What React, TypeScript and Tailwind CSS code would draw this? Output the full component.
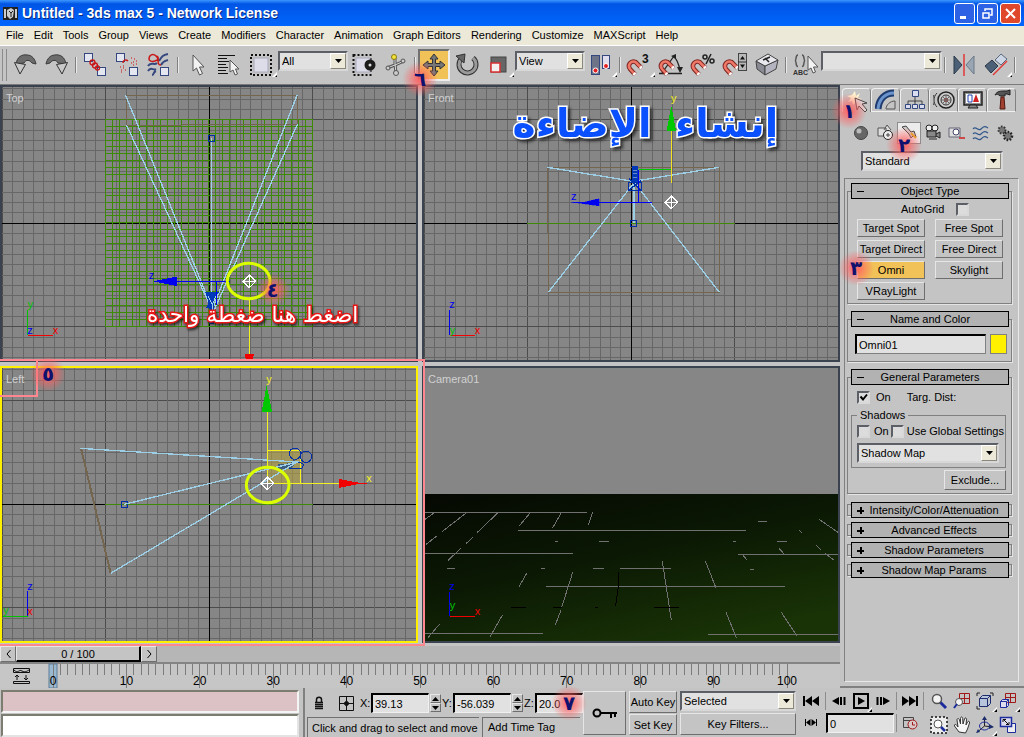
import { ReactNode } from "react";
import clsx from "clsx";

const menus = [
  "File", "Edit", "Tools", "Group", "Views", "Create", "Modifiers", "Character",
  "Animation", "Graph Editors", "Rendering", "Customize", "MAXScript", "Help",
];

const raised = "border border-t-[#e6e6e6] border-l-[#e6e6e6] border-b-[#6e6e6e] border-r-[#6e6e6e]";
const sunken = "border-2 border-t-[#5c6066] border-l-[#5c6066] border-b-[#d8d8d8] border-r-[#d8d8d8]";

/* ---------- shared controls ---------- */

function Step({ n, className }: { n: string; className: string }) {
  return (
    <span
      className={clsx(
        "pointer-events-none absolute z-20 flex size-9 items-center justify-center bg-radial from-[#ff6060dd] from-10% to-[#ff606000] to-70% font-['DejaVu_Sans'] text-xl font-bold text-[#10106e]",
        className,
      )}
    >
      {n}
    </span>
  );
}

function Combo({ label, value, className }: { label: string; value: string; className?: string }) {
  return (
    <div className={clsx("relative h-5 bg-[#e1e1e1]", sunken, className)}>
      <select aria-label={label} className="block h-4 w-full appearance-none bg-transparent pl-[2px] text-[11px] leading-4 outline-none">
        <option>{value}</option>
      </select>
      <span className="pointer-events-none absolute inset-y-0 right-0 flex w-4 items-center justify-center border border-t-white border-r-[#8a887c] border-b-[#8a887c] border-l-white bg-[#ece9d8]">
        <svg width="7" height="4" viewBox="0 0 7 4">
          <path d="M0 0h7L3.500 4z" />
        </svg>
      </span>
    </div>
  );
}

function Check({ id, checked }: { id: string; checked?: boolean }) {
  return (
    <span className="relative block size-[13px] shrink-0">
      <input id={id} type="checkbox" defaultChecked={checked} className={clsx("peer block size-[13px] appearance-none bg-[#dcdcdc]", sunken)} />
      <svg className="pointer-events-none absolute inset-0 hidden peer-checked:block" viewBox="0 0 13 13">
        <path d="M3.500 5.500l2.500 3 4-5" fill="none" stroke="#000" strokeWidth="2" />
      </svg>
    </span>
  );
}

function Button({ children, className }: { children: ReactNode; className?: string }) {
  return (
    <button className={clsx("relative flex items-center justify-center whitespace-nowrap text-[11px] leading-3", raised, className)}>
      {children}
    </button>
  );
}

function Spinner({ label }: { label: string }) {
  return (
    <span className="mx-px flex h-[18px] w-[11px] shrink-0 flex-col">
      <button aria-label={label + " up"} className={clsx("flex flex-1 items-center justify-center", raised)}>
        <svg width="7" height="4" viewBox="0 0 7 4"><path d="M0 4h7L3.500 0z" /></svg>
      </button>
      <button aria-label={label + " down"} className={clsx("flex flex-1 items-center justify-center", raised)}>
        <svg width="7" height="4" viewBox="0 0 7 4"><path d="M0 0h7L3.500 4z" /></svg>
      </button>
    </span>
  );
}

/* ---------- main toolbar ---------- */

function Tool({ label, children, active, flyout }: { label: string; children: ReactNode; active?: boolean; flyout?: boolean }) {
  return (
    <button
      aria-label={label}
      className={clsx(
        "relative flex size-8 shrink-0 items-center justify-center",
        active && "border-2 border-t-[#707070] border-r-[#eeeeee] border-b-[#eeeeee] border-l-[#707070] bg-[#f0c258]",
      )}
    >
      <svg width="26" height="26" viewBox="-1 -1 26 26" fill="none" className="shrink-0">{children}</svg>
      {flyout && (
        <svg width="5" height="5" viewBox="0 0 5 5" className="absolute right-0 bottom-1">
          <path d="M0 5L5 0v5z" fill="#fff" />
          <path d="M3 5h2V3z" fill="#000" />
        </svg>
      )}
    </button>
  );
}

function Sep() {
  return (
    <span className="flex w-[6px] shrink-0 justify-center">
      <span className="h-4 w-[2px] border-r border-l border-r-[#eaeaea] border-l-[#808080]" />
    </span>
  );
}

const Box = ({ x, y, s = 9 }: { x: number; y: number; s?: number }) => (
  <rect x={x + 0.5} y={y + 0.5} width={s - 1} height={s - 1} fill="#e4e6f0" stroke="#34477e" />
);

const Magnet = () => (
  <>
    <path d="M8 21.500L3 16C0 12 4 7 8.500 9l6 6" stroke="#7c2520" strokeWidth="4.500" />
    <path d="M8 21.500L3 16C0 12 4 7 8.500 9l6 6" stroke="#f07868" strokeWidth="2.500" />
    <path d="M6.700 20.100L8 21.500M13.200 13.700l1.300 1.300" stroke="#fff" strokeWidth="3.500" />
  </>
);

const Cursor = ({ x = 0, y = 0 }: { x?: number; y?: number }) => (
  <path transform={`translate(${x} ${y})`} d="M0 0v16l3.500-3 3 7 3-1.500-3-6.500H11z" fill="#f2f2f2" stroke="#555" />
);

function Toolbar() {
  return (
    <div className="relative z-10 flex h-10 items-center overflow-visible border-t border-b border-t-white border-b-[#7a7a7a] bg-[#c4c4c4]">
      <span className="ml-[2px] mr-[2px] h-8 w-[5px] shrink-0 border-x border-x-[#8c8c8c]" />
      <Tool label="Undo">
        <path d="M3 11C4 4 9 1 14 2c5 0 8 4 9 9l-4-1c-2-3-6-4-8 0z" fill="#6c6c6c" stroke="#3a3a3a" />
        <path d="M1.500 9.500l11 2L7 21z" fill="#c8c8c8" stroke="#333" />
      </Tool>
      <Tool label="Redo">
        <path d="M21 11c-1-7-6-10-11-9-5 0-8 4-9 9l4-1c2-3 6-4 8 0z" fill="#6c6c6c" stroke="#3a3a3a" />
        <path d="M22.500 9.500l-11 2L17 21z" fill="#c8c8c8" stroke="#333" />
      </Tool>
      <Sep />
      <Tool label="Select and Link">
        <Box x={1} y={0} />
        <Box x={14} y={14} />
        <circle cx="9.500" cy="9.500" r="2.500" stroke="#c81818" strokeWidth="1.300" />
        <circle cx="12" cy="12.500" r="2.500" stroke="#c81818" strokeWidth="1.300" />
        <circle cx="14.500" cy="15" r="2" stroke="#c81818" strokeWidth="1.300" />
      </Tool>
      <Tool label="Unlink Selection">
        <Box x={1} y={0} />
        <Box x={14} y={14} />
        <path d="M8 10c0-3 3-4 5-2" stroke="#c81818" strokeWidth="1.500" />
        <path d="M5 14h1m2-1h1m-3 4h1m1-2h1m-3 4h1m3-2h1m5-12h1m2 1h1m-2 3h1m2-1h1m-6 2h1m1 2h1m2-1h1" stroke="#d04848" strokeWidth="1.500" />
      </Tool>
      <Tool label="Bind to Space Warp">
        <path d="M1 13c3-5 6 0 9-3M1 18c3-5 5 0 8-2M12 8c3-5 4-6 9-7M14 12c2-4 4-4 7-5M5 22c2 0 1-3 4-4" stroke="#34477e" strokeWidth="2" />
        <path d="M2 6C2 2 6 0 9 3s2 4-1 5-6 0-6-2zM9 3c5 0-1 9 5 9" stroke="#c81818" strokeWidth="1.500" />
        <Box x={13} y={14} />
      </Tool>
      <Sep />
      <Tool label="Select Object"><Cursor x={8} y={2} /></Tool>
      <Tool label="Select by Name">
        <path d="M1 2.500h17M1 5.500h9M1 8.500h11M1 11.500h8M1 14.500h10M1 17.500h8M1 20.500h10" stroke="#111" />
        <path d="M13 7v12l3-2 2 5 2.500-1-2-5H22z" fill="#f2f2f2" stroke="#555" />
      </Tool>
      <Tool label="Rectangular Selection Region" flyout>
        <rect x="2" y="2" width="20" height="20" stroke="#111" strokeWidth="2" strokeDasharray="2 2" />
        <rect x="5" y="5" width="14" height="14" fill="#dcdde8" stroke="#a8aabb" />
      </Tool>
      <Combo label="Selection Filter" value="All" className="ml-px w-[70px] shrink-0 -translate-y-1" />
      <Tool label="Window / Crossing">
        <rect x="1.500" y="2" width="17" height="20" stroke="#111" strokeWidth="2" strokeDasharray="2 2" />
        <rect x="4" y="5" width="14" height="14" fill="#dcdde8" stroke="#a8aabb" />
        <circle cx="18" cy="12" r="5.500" fill="#1c1c1c" />
        <circle cx="18" cy="12" r="1.500" fill="#ddd" />
      </Tool>
      <Tool label="Select and Manipulate">
        <path d="M3 15l8-3 9-4M11 5v6l1 9" stroke="#555" strokeWidth="3" />
        <path d="M3 15l8-3 9-4M11 5v6l1 9" stroke="#d8d8d8" />
        <circle cx="10" cy="4" r="2.500" fill="#f4e23c" stroke="#8c7c10" />
        <circle cx="19" cy="8" r="2" fill="#ccc" stroke="#555" />
        <circle cx="4" cy="15" r="2" fill="#ccc" stroke="#555" />
        <circle cx="12" cy="20" r="2.500" fill="#ccc" stroke="#555" />
      </Tool>
      <Sep />
      <div className="relative">
        <Tool label="Select and Move" active>
          <path
            d="M12 1l4 5h-2.500v4.500H18V8l5 4-5 4v-2.500h-4.500V18H16l-4 5-4-5h2.500v-4.500H6V16l-5-4 5-4v2.500h4.500V6H8z"
            fill="#777" stroke="#333"
          />
        </Tool>
        <Step n="٦" className="-left-4 top-3" />
      </div>
      <Tool label="Select and Rotate">
        <path d="M7 6a8.500 8.500 0 1 0 12-1" stroke="#333" strokeWidth="5" />
        <path d="M7 6a8.500 8.500 0 1 0 12-1" stroke="#9a9a9a" strokeWidth="3" />
        <path d="M2 3l9-2-1 9z" fill="#666" stroke="#333" />
      </Tool>
      <Tool label="Select and Uniform Scale" flyout>
        <rect x="5" y="4" width="15" height="15" fill="#666" stroke="#444" />
        <rect x="5" y="10" width="9" height="9" fill="#f4f0f0" stroke="#d83030" strokeWidth="1.500" />
      </Tool>
      <Combo label="Reference Coordinate System" value="View" className="ml-px w-[70px] shrink-0 -translate-y-1" />
      <Tool label="Use Pivot Point Center" flyout>
        <rect x="2.500" y="2.500" width="8" height="19" fill="#6d7488" stroke="#34477e" />
        <rect x="13.500" y="2.500" width="7" height="13" fill="#dde" stroke="#34477e" />
        <circle cx="6.500" cy="17.500" r="2.500" fill="#e42020" stroke="#fff" />
        <circle cx="17" cy="13" r="2.500" fill="#e42020" stroke="#fff" />
      </Tool>
      <Sep />
      <Tool label="3D Snap Toggle" flyout>
        <Magnet />
        <text x="15" y="10" fontSize="12" fontWeight="bold" fill="#111" className="font-['Liberation_Sans']">3</text>
      </Tool>
      <Tool label="Angle Snap Toggle">
        <path d="M0 20.500h23M3 20L15 3M14 3c4 3 6 8 7 15" stroke="#222" strokeWidth="1.300" />
        <path d="M12 3l5-2v5zM18 14h6l-3 6z" fill="#222" />
        <Magnet />
      </Tool>
      <Tool label="Percent Snap Toggle">
        <Magnet />
        <circle cx="14" cy="4" r="2" stroke="#222" strokeWidth="1.500" />
        <circle cx="21" cy="8" r="2" stroke="#222" strokeWidth="1.500" />
        <path d="M20 1l-5 10" stroke="#222" strokeWidth="1.500" />
      </Tool>
      <Tool label="Spinner Snap Toggle">
        <Magnet />
        <rect x="15.500" y=".5" width="8" height="17" fill="#b8b8b8" stroke="#444" />
        <path d="M15 9h9" stroke="#333" />
        <path d="M17 6.500h5L19.500 3zM17 11.500h5L19.500 15z" fill="#111" />
      </Tool>
      <Tool label="Keyboard Shortcut Override">
        <path d="M1 8l9 5v9l-8-6z" fill="#8a8a94" stroke="#444" />
        <path d="M10 13l13-6-2 9-11 6z" fill="#b4b4c0" stroke="#444" />
        <path d="M1 8L13 1l10 6-13 6z" fill="#e8e8ee" stroke="#444" />
        <path d="M8 7l7-3M10 5l4 4" stroke="#222" strokeWidth="1.500" />
      </Tool>
      <Sep />
      <Tool label="Named Selection Sets">
        <path d="M5 2c-3 0-1 5-3 5.500 2 .5 0 6 3 6M9 2c3 0 1 5 3 5.500-2 .5 0 6-3 6" stroke="#555" strokeWidth="1.500" />
        <path d="M15 3v14l3-2 2 5 2.500-1-2-5H25z" fill="#f2f2f2" stroke="#555" />
        <text x="0" y="22" fontSize="7" fontWeight="bold" fill="#333" className="font-['Liberation_Sans']">ABC</text>
      </Tool>
      <Combo label="Named Selection" value="" className="w-[119px] min-w-0 flex-1 -translate-y-1" />
      <Sep />
      <Tool label="Mirror">
        <path d="M2 3v18l8-9z" fill="#4c6078" stroke="#2a3a4a" />
        <path d="M22 3v18l-8-9z" fill="#9aa6b4" stroke="#6a7888" />
        <path d="M12 1v22" stroke="#e03838" strokeWidth="1.500" />
      </Tool>
      <Tool label="Align" flyout>
        <path d="M1 13l7-6 6 6-7 7z" fill="#4c6078" stroke="#2a3a4a" />
        <path d="M11 7l6-6 6 5-6 6z" fill="#ccd6e4" stroke="#5a6a7c" />
        <path d="M9 22L23 8" stroke="#e03838" strokeWidth="1.500" />
      </Tool>
      <Sep />
      <span className="w-[6px] shrink-0" />
    </div>
  );
}

/* ---------- viewports (three drawing units to a screen pixel) ---------- */

const lines = Array.from({ length: 41 }, (_, i) => i - 20);

function Grid({ cx, cy }: { cx: number; cy: number }) {
  const color = (i: number) => (i % 10 === 0 ? "#4c4c4c" : "#676767");
  return (
    <g strokeWidth="3">
      <rect x="0" y="0" width="1272" height="855" fill="#868686" />
      {lines.map((i) => (
        <path key={i} stroke={color(i)} d={`M${cx + i * 31.050} 0V855M0 ${cy + i * 31.050}H1272`} />
      ))}
      <path stroke="#000" d={`M${cx} 0V855M0 ${cy}H1272`} />
    </g>
  );
}

function Axis({ x, y, color, children }: { x: number; y: number; color: string; children: string }) {
  return (
    <text x={x} y={y} fill={color} fontSize="33" className="font-['Liberation_Sans']">{children}</text>
  );
}

function Target({ x, y }: { x: number; y: number }) {
  return (
    <path d={`M${x - 19} ${y}L${x} ${y - 19}L${x + 19} ${y}L${x} ${y + 19}ZM${x - 19} ${y}H${x + 19}M${x} ${y - 19}V${y + 19}`} fill="none" stroke="#fff" strokeWidth="3" />
  );
}

function Ring({ x, y }: { x: number; y: number }) {
  return <ellipse cx={x} cy={y} rx="64" ry="53" fill="none" stroke="#dcff00" strokeWidth="9" shapeRendering="auto" />;
}

function Viewport({ name, viewBox, active, children, overlay }: { name: string; viewBox: string; active?: boolean; children: ReactNode; overlay?: ReactNode }) {
  return (
    <section aria-label={name} className={clsx("relative border-2", active ? "border-[#fff000]" : "border-[#3a4250]")}>
      <svg className="absolute inset-0 size-full" viewBox={viewBox} preserveAspectRatio="xMidYMid slice" shapeRendering="crispEdges">{children}</svg>
      <h2 className="absolute top-[3px] left-1 text-[11px] leading-4 text-[#d0d0d0]">{name}</h2>
      {overlay}
    </section>
  );
}

function TopView() {
  return (
    <Viewport name="Top" viewBox="6 6 1242 819">
      <Grid cx={628} cy={415} />
      <g stroke="#3c8a08" strokeWidth="3">
        {Array.from({ length: 31 }, (_, i) => (
          <path key={i} d={`M${316 + i * 20.730} 103V724M316 ${103 + i * 20.700}H938`} />
        ))}
      </g>
      <path d="M377 31H892V118L380 121V31" fill="none" stroke="#74664e" strokeWidth="3" />
      <path d="M377 31L634 665M380 121L637 676M892 29L640 665M892 118L642 676M634 160V680" fill="none" stroke="#9ccfe6" strokeWidth="4" />
      <rect x="625" y="151" width="18" height="18" fill="none" stroke="#0030a8" strokeWidth="3" />
      <path d="M616 622h40l-14 26v70h-16v-50h-8l8-14z" fill="#0038b8" />
      <path d="M624 632L637 660L648 632M637 655V690" fill="none" stroke="#9ccfe6" strokeWidth="3" />
      <path d="M530 589H690M650 589V660" stroke="#0000f0" strokeWidth="3" />
      <path d="M460 589L530 575V603Z" fill="#0000f0" />
      <Axis x={446} y={583} color="#0000f0">z</Axis>
      <path d="M748 640V810" stroke="#f4f020" strokeWidth="3" />
      <path d="M734 807h28l-4 18h-20z" fill="#f00000" />
      <Ring x={746} y={588} />
      <Target x={748} y={589} />
      <path d="M83 751V676" stroke="#00c000" strokeWidth="3" />
      <path d="M83 751H160" stroke="#f00000" strokeWidth="3" />
      <Axis x={83} y={668} color="#00c000">y</Axis>
      <Axis x={82} y={748} color="#0000f0">z</Axis>
      <Axis x={158} y={748} color="#f00000">x</Axis>
      <radialGradient id="glow">
        <stop offset="0.100" stopColor="#ff6060" stopOpacity="0.900" />
        <stop offset="1" stopColor="#ff6060" stopOpacity="0" />
      </radialGradient>
      <circle cx="820" cy="615" r="48" fill="url(#glow)" />
      <text x="818" y="636" textAnchor="middle" fontSize="58" fontWeight="bold" fill="#10106e" className="font-['DejaVu_Sans']">٤</text>
      <text
        x="758" y="712" textAnchor="middle" direction="rtl" fontSize="65" fill="#fff" stroke="#e81818" strokeWidth="9"
        className="font-['DejaVu_Sans'] [paint-order:stroke_fill] drop-shadow-[4px_6px_3px_#00000099]"
      >
        اضغط هنا ضغطة واحدة
      </text>
    </Viewport>
  );
}

function FrontView() {
  return (
    <Viewport name="Front" viewBox="12 6 1242 819">
      <Grid cx={634} cy={415} />
      <path d="M322 415H944" stroke="#3c8a08" strokeWidth="3" />
      <path d="M383 247H898V622H385Z" fill="none" stroke="#74664e" strokeWidth="3" />
      <path d="M382 247L640 289L898 247M385 622L643 292L898 622M642 292V415" fill="none" stroke="#9ccfe6" strokeWidth="4" />
      <rect x="636" y="244" width="18" height="48" fill="#0038b8" />
      <path d="M638 256h14M638 266h14M638 276h14" stroke="#6888c8" strokeWidth="3" />
      <path d="M626 292H664V316H626ZM626 280L664 316M664 286L626 316" fill="none" stroke="#0030a8" strokeWidth="4" />
      <rect x="631" y="406" width="18" height="18" fill="none" stroke="#0030a8" strokeWidth="3" />
      <path d="M536 352H696M656 352V256" stroke="#0000f0" strokeWidth="3" />
      <path d="M452 352H490L537 341V363L474 354Z" fill="#0000f0" stroke="#0000f0" />
      <path d="M656 254H754" stroke="#00c800" strokeWidth="3" />
      <Axis x={453} y={346} color="#0000f0">z</Axis>
      <path d="M754 136V293" stroke="#f4e020" strokeWidth="3" />
      <path d="M754 62L768 137H740Z" fill="#00c800" />
      <Axis x={753} y={50} color="#f4f020">y</Axis>
      <Target x={754} y={352} />
      <path d="M89 751V676" stroke="#0000f0" strokeWidth="3" />
      <path d="M89 751H166" stroke="#f00000" strokeWidth="3" />
      <Axis x={88} y={670} color="#0000f0">z</Axis>
      <Axis x={89} y={748} color="#00c000">y</Axis>
      <Axis x={164} y={748} color="#f00000">x</Axis>
      <g
        textAnchor="middle" direction="rtl" fontSize="118" fill="#0a50ff" stroke="#fff" strokeWidth="9"
        className="font-['DejaVu_Sans'] font-bold [paint-order:stroke_fill] drop-shadow-[8px_8px_4px_#00000099]"
      >
        <text x="920" y="156">إنشاء</text>
        <text x="486" y="156">الإضاءة</text>
      </g>
    </Viewport>
  );
}

function LeftView() {
  return (
    <Viewport
      name="Left"
      viewBox="6 24 1242 819"
      active
      overlay={
        <>
          <span className="pointer-events-none absolute -top-[9px] -right-[9px] -bottom-[5px] -left-[2px] z-10 border-2 border-l-0 border-[#ff8890]" />
          <span className="pointer-events-none absolute -top-[9px] -left-[2px] z-10 h-[38px] w-[38px] border-2 border-l-0 border-[#ff8890]" />
          <Step n="٥" className="-top-3 left-7" />
        </>
      }
    >
      <Grid cx={628} cy={433} />
      <path d="M316 433H938" stroke="#3c8a08" strokeWidth="3" />
      <path d="M243 265L332 640" stroke="#74664e" strokeWidth="6" />
      <rect x="803" y="271" width="99" height="99" fill="#b8a63a" fillOpacity=".55" stroke="#f4f020" strokeWidth="3" />
      <g fill="none" stroke="#0030a8" strokeWidth="3">
        <circle cx="885" cy="281" r="17" />
        <circle cx="918" cy="290" r="17" />
        <path d="M870 325h36l6-12-24-10z" />
        <rect x="364" y="424" width="18" height="18" />
      </g>
      <path d="M834 312l36-2 14-12 4 10-14 16-38 6z" fill="#3c5c80" />
      <path d="M240 265L892 306L332 640M373 433L892 306" fill="none" stroke="#9ccfe6" strokeWidth="4" />
      <path d="M802 312V155M802 370H1017" stroke="#f4f020" strokeWidth="3" />
      <path d="M800 76L816 155H785Z" fill="#00c800" />
      <path d="M1017 357L1086 370L1017 384Z" fill="#f00000" />
      <path d="M1080 370H1102" stroke="#f00000" strokeWidth="3" />
      <Axis x={799} y={69} color="#f4f020">y</Axis>
      <Axis x={1099} y={366} color="#f4f020">x</Axis>
      <Ring x={803} y={375} />
      <Target x={802} y={370} />
      <path d="M83 769V694" stroke="#0000f0" strokeWidth="3" />
      <path d="M8 769H83" stroke="#00c000" strokeWidth="3" />
      <Axis x={82} y={690} color="#0000f0">z</Axis>
      <Axis x={10} y={763} color="#00c000">y</Axis>
      <Axis x={82} y={766} color="#f00000">x</Axis>
    </Viewport>
  );
}

function CameraView() {
  return (
    <Viewport name="Camera01" viewBox="12 24 1242 819">
      <linearGradient id="floor" x1="0" y1="0" x2="0.600" y2="1">
        <stop offset="0" stopColor="#050802" />
        <stop offset="0.500" stopColor="#0b1904" />
        <stop offset="1" stopColor="#193206" />
      </linearGradient>
      <rect width="1272" height="855" fill="#868686" />
      <rect y="402" width="1272" height="453" fill="url(#floor)" />
      <g fill="none" stroke="#707070" strokeWidth="3">
        <path d="M12 457H501M294 511H978M12 580H459M954 583H1254M600 625H753M378 679H1095M12 820H369M864 823H1254M81 625H105M363 625H375M519 625H552M405 544H414M537 544H567M939 544H948M1071 544H1101M1014 484H1041M990 628H1002" />
        <path d="M45 457L15 478M141 457L66 515M52 527L18 553M234 458L172 517M158 532L138 551M123 565L84 601M329 460L297 499M423 460L397 505M518 457L505 496M320 640L297 680M458 637L424 745M423 750L406 795M727 603L754 781M856 603L888 684M247 766L210 830M58 793L24 833M918 757L950 835M1084 757L1130 827M1197 478L1254 517M1137 511L1145 517M1188 556L1203 570M1077 565L1096 586M969 586L981 600M1215 580L1241 600" />
      </g>
      <path d="M595 637V680L587 737M273 742H318M399 742H426M525 742H534M702 742H777" fill="none" stroke="#000" strokeWidth="3" />
      <path d="M89 769V696" stroke="#0000f0" strokeWidth="3" />
      <path d="M89 769H166" stroke="#f00000" strokeWidth="3" />
      <Axis x={88} y={691} color="#0000f0">z</Axis>
      <Axis x={89} y={746} color="#00c000">y</Axis>
      <Axis x={164} y={766} color="#f00000">x</Axis>
    </Viewport>
  );
}

/* ---------- time slider and track bar ---------- */

function TimeSlider() {
  return (
    <div className="mt-[3px] flex h-4 bg-[#b6b6b6] text-[11px]">
      <Button className="w-4 bg-[#c4c4c4]">
        <svg width="5" height="8" viewBox="0 0 5 8" fill="none" stroke="#000"><path d="M4.500 0L1 4l3.500 4" /></svg>
      </Button>
      <button className="w-[125px] border border-t-[#e6e6e6] border-r-2 border-r-black border-b-2 border-b-black border-l-[#e6e6e6] bg-[#c4c4c4] leading-3">0 / 100</button>
      <Button className="w-4 bg-[#c4c4c4]">
        <svg width="5" height="8" viewBox="0 0 5 8" fill="none" stroke="#000"><path d="M.5 0L4 4 .5 8" /></svg>
      </Button>
    </div>
  );
}

function TrackBar() {
  return (
    <div className="flex h-[26px] border-t-2 border-t-[#848484] bg-[#c6c6c6]">
      <button aria-label="Open Mini Curve Editor" className="flex w-[53px] items-center pl-3">
        <svg width="19" height="18" viewBox="0 0 19 18" fill="none" stroke="#111">
          <path d="M1.500 1.500h16v4h-16zM1.500 14.500h16v2h-16zM2 3c4 4 5-1 8 1s5 0 7-1M5 13V8M3 10l2-2 2 2M14 8v5M12 11l2 2 2-2" />
        </svg>
      </button>
      <svg className="mr-[53px] h-6 flex-1 overflow-visible text-[12px]">
        <rect x="-4" y="0" width="8" height="24" fill="#9ab8d0" stroke="#5c7c98" />
        {Array.from({ length: 101 }, (_, i) => (
          <line key={i} x1={`${i}%`} x2={`${i}%`} y1="0" y2={i % 10 ? 11 : 24} stroke="#7c7c7c" shapeRendering="crispEdges" />
        ))}
        {Array.from({ length: 11 }, (_, i) => (
          <text key={i} x={`${i * 10}%`} y="21" textAnchor="middle">{i * 10}</text>
        ))}
      </svg>
    </div>
  );
}

/* ---------- command panel ---------- */

const tabs: [string, ReactNode][] = [
  ["Create", <>
    <path d="M9 1l1 5 4-3-2 5 4 1-4 1-5 5-1-4-4 1 3-4-4-2 5-1z" fill="#fff6d0" />
    <path d="M9 8l12 5-5 1 5 6-2 2-6-6-2 4z" fill="#ddd" stroke="#444" />
  </>],
  ["Modify", <>
    <path d="M3 20C4 10 10 4 19 4" stroke="#1e3c70" strokeWidth="7" />
    <path d="M3 20C4 10 10 4 19 4" stroke="#6c94cc" strokeWidth="3" />
    <path d="M11 20c0-4 4-8 9-8v8z" stroke="#555" />
  </>],
  ["Hierarchy", <>
    <path d="M11 7v6M4 15v-3h14v3M11 12v3" stroke="#444" />
    <path d="M8.500 1.500h6v6h-6zM1.500 15.500h5v4h-5zM8.500 15.500h5v4h-5zM15.500 15.500h5v4h-5z" fill="#d8def0" stroke="#34477e" />
  </>],
  ["Motion", <>
    <circle cx="13" cy="11" r="8" fill="#ccc" stroke="#222" strokeWidth="1.500" />
    <circle cx="13" cy="11" r="5" stroke="#333" />
    <circle cx="13" cy="11" r="2" fill="#c02020" />
    <path d="M13 6v10M8 11h10M9 7l8 8M17 7l-8 8" stroke="#666" />
    <path d="M4 4c-4 4-4 10 0 14M1 6c-2 4-2 7 0 10" stroke="#333" />
  </>],
  ["Display", <>
    <path d="M2 3h18v13H2z" fill="#909090" stroke="#222" strokeWidth="1.500" />
    <path d="M4 5h14v9H4z" fill="#fff" />
    <path d="M11 13l3-8 3 8z" fill="#d02020" />
    <path d="M6 6h4v7H6z" stroke="#2040b0" />
    <path d="M6 19h10l-2-3H8z" fill="#888" stroke="#222" />
  </>],
  ["Utilities", <>
    <path d="M4 6c2-4 6-4 9-4h3l3-1v5l-3-1h-2v2H9C7 5 6 5 4 6z" fill="#555" stroke="#222" />
    <path d="M10 8h3l1 12H9z" fill="#a04030" stroke="#501810" />
  </>],
];

const categories: [string, ReactNode][] = [
  ["Geometry", <>
    <circle cx="9" cy="9" r="6.500" fill="#666" stroke="#444" />
    <circle cx="7" cy="7" r="2.500" fill="#bbb" />
  </>],
  ["Shapes", <>
    <path d="M2 4h8v8H2zM8 6l3-5 4 5" fill="#ddd" stroke="#555" />
    <circle cx="12" cy="11" r="4.500" fill="#eee" stroke="#222" />
    <path d="M12 9v4M10 11h4" stroke="#444" />
  </>],
  ["Lights", <>
    <path d="M2 3l4-1 5 6 3-1 2 6-3-1-2 2-2-4z" fill="#ccc" stroke="#444" />
    <path d="M11 9l5 5" stroke="#e8b020" strokeWidth="2" />
  </>],
  ["Cameras", <>
    <circle cx="5" cy="4" r="3" fill="#eee" stroke="#222" />
    <circle cx="11" cy="4" r="3" fill="#eee" stroke="#222" />
    <path d="M3 7h9v6H3zM12 10l4-2v6l-4-2M5 15h8" fill="#888" stroke="#222" />
  </>],
  ["Helpers", <>
    <path d="M1 4h11v9H1z" fill="#ddd" stroke="#667" />
    <circle cx="8" cy="8" r="3" fill="#fff" stroke="#446" />
    <path d="M11 14h6" stroke="#d02020" strokeWidth="1.500" />
  </>],
  ["Space Warps", <path d="M1 5c3-4 5 3 8 0s4-3 7-1M1 10c3-4 5 3 8 0s4-3 7-1M1 15c3-4 5 3 8 0s4-3 7-1" stroke="#34588c" strokeWidth="1.200" />],
  ["Systems", <>
    <circle cx="6" cy="6" r="3.500" fill="#777" stroke="#333" strokeWidth="2" strokeDasharray="1.500 1.500" />
    <circle cx="12" cy="12" r="4" fill="#777" stroke="#222" strokeWidth="2.500" strokeDasharray="1.500 1.500" />
  </>],
];

function Rollout({ title, children }: { title: string; children?: ReactNode }) {
  return (
    <section className={clsx("mr-[6px] ml-[2px] border border-[#808080] shadow-[1px_1px_0_#e4e4e4]", children ? "mt-[15px] first:mt-3" : "mt-2 h-3")}>
      <button
        className={clsx(
          "relative mx-[3px] block h-4 w-[158px] border border-black bg-[#b2b2b2] text-center text-[11px] leading-[14px]",
          children ? "-mt-[9px]" : "-mt-[3px] pl-2",
        )}
      >
        <svg className="absolute top-1 left-[5px]" width="7" height="7" viewBox="0 0 7 7" stroke="#000" shapeRendering="crispEdges">
          {children ? <path d="M0 3.500h7" /> : <path d="M0 3.500h7M3.500 0v7" strokeWidth="2" />}
        </svg>
        {title}
      </button>
      {children}
    </section>
  );
}

function CommandPanel() {
  return (
    <aside className="flex w-[184px] shrink-0 flex-col border-b-2 border-b-[#808080] bg-[#c4c4c4] pt-[3px] text-[11px]">
      <div className="flex h-6 pl-[2px]">
        {tabs.map(([name, icon], i) => (
          <button
            key={name}
            aria-label={name}
            className={clsx(
              "relative flex w-[29px] items-center justify-center rounded-t border-t border-r border-l border-t-[#f0f0f0] border-r-[#808080] border-l-[#f0f0f0]",
              i > 0 && "border-b border-b-[#f0f0f0]",
            )}
          >
            <svg width="22" height="22" viewBox="0 0 22 22" fill="none">{icon}</svg>
            {i === 0 && <Step n="١" className="-left-3 top-1" />}
          </button>
        ))}
      </div>
      <div className="mt-[9px] flex h-6 items-center pl-[9px]">
        {categories.map(([name, icon]) => (
          <button
            key={name}
            aria-label={name}
            className={clsx("relative flex h-[22px] w-6 items-center justify-center", name === "Lights" && "border border-[#8c8c8c] bg-[#ececec]")}
          >
            <svg width="18" height="18" viewBox="0 0 18 18" fill="none" className="shrink-0">{icon}</svg>
            {name === "Lights" && <Step n="٢" className="-left-3 top-1" />}
          </button>
        ))}
      </div>
      <Combo label="Light Category" value="Standard" className="mt-[6px] mr-[21px] ml-[21px]" />

      <div className="mt-[7px] mr-[5px] mb-1 ml-1 flex-1 border border-t-[#808080] border-r-[#e8e8e8] border-b-[#e8e8e8] border-l-[#808080]">
        <Rollout title="Object Type">
          <div className="mt-[3px] flex h-[14px] items-center pl-[53px]">
            <label htmlFor="autogrid" className="mr-3">AutoGrid</label>
            <Check id="autogrid" />
          </div>
          <div className="mt-[3px] grid grid-cols-[68px_68px] gap-x-[10px] gap-y-[3px] pb-[3px] pl-[9px]">
            <Button className="h-[18px]">Target Spot</Button>
            <Button className="h-[18px]">Free Spot</Button>
            <Button className="h-[18px]">Target Direct</Button>
            <Button className="h-[18px]">Free Direct</Button>
            <Button className="h-[18px] bg-[#f0c258]">
              Omni
              <Step n="٣" className="-top-3 -left-5" />
            </Button>
            <Button className="h-[18px]">Skylight</Button>
            <Button className="h-[18px]">VRayLight</Button>
          </div>
        </Rollout>

        <Rollout title="Name and Color">
          <div className="mt-[7px] flex gap-1 pr-1 pb-[7px] pl-[7px]">
            <input aria-label="Object name" defaultValue="Omni01" className="h-5 min-w-0 flex-1 border-t-2 border-r border-b border-l-2 border-t-black border-r-[#808080] border-b-[#808080] border-l-black bg-[#e1e1e1] px-[2px] outline-none" />
            <button aria-label="Object color" className="h-5 w-[17px] border border-[#808080] bg-[#fff000]" />
          </div>
        </Rollout>

        <Rollout title="General Parameters">
          <div className="mt-[6px] flex h-[13px] items-center pl-[9px]">
            <Check id="light-on" checked />
            <label htmlFor="light-on" className="ml-[6px]">On</label>
            <span className="ml-4">Targ. Dist:</span>
          </div>
          <fieldset className="mt-1 mr-[5px] ml-[3px] min-w-0 border border-[#808080] pb-1 pl-[5px]">
            <legend className="px-[3px] leading-[14px]">Shadows</legend>
            <div className="mt-[3px] flex h-3 items-center">
              <Check id="shadows-on" />
              <label htmlFor="shadows-on" className="ml-1">On</label>
              <span className="w-[2px] shrink-0" />
              <Check id="shadows-global" />
              <label htmlFor="shadows-global" className="ml-[3px] whitespace-nowrap">Use Global Settings</label>
            </div>
            <Combo label="Shadow type" value="Shadow Map" className="mt-[6px] mr-[6px]" />
          </fieldset>
          <div className="mt-[2px] flex justify-end pr-[5px] pb-[3px]">
            <Button className="h-5 w-[62px]">Exclude...</Button>
          </div>
        </Rollout>

        <div className="h-[2px]" />
        <Rollout title="Intensity/Color/Attenuation" />
        <Rollout title="Advanced Effects" />
        <Rollout title="Shadow Parameters" />
        <Rollout title="Shadow Map Params" />
      </div>
    </aside>
  );
}

/* ---------- status bar ---------- */

function Coord({ axis, value, className, children }: { axis: string; value: string; className: string; children?: ReactNode }) {
  return (
    <>
      <label htmlFor={"coord-" + axis} className="w-[11px] shrink-0">{axis}:</label>
      <div className={clsx("relative", className)}>
        <input id={"coord-" + axis} defaultValue={value} className="block h-5 w-full border-t-2 border-r border-b border-l-2 border-t-black border-r-[#f0f0f0] border-b-[#f0f0f0] border-l-black bg-[#e1e1e1] px-[2px] outline-none" />
        {children}
      </div>
    </>
  );
}

function Glyph({ label, className, children, flyout }: { label: string; className?: string; children: ReactNode; flyout?: boolean }) {
  return (
    <button aria-label={label} className={clsx("relative flex h-[22px] shrink-0 items-center justify-center", className)}>
      <svg width="18" height="18" viewBox="0 0 18 18" fill="none">{children}</svg>
      {flyout && (
        <svg width="5" height="5" viewBox="0 0 5 5" className="absolute right-0 bottom-0">
          <path d="M0 5L5 0v5z" fill="#fff" />
          <path d="M2 5h3V2z" fill="#000" />
        </svg>
      )}
    </button>
  );
}

const Divider = () => (
  <span className="flex w-[5px] shrink-0 justify-center"><span className="h-[18px] border-l border-[#8c8c8c]" /></span>
);

function StatusBar() {
  return (
    <footer className="flex h-[49px] bg-[#c4c4c4] text-[11px]">
      <div className="flex min-w-0 flex-1 flex-col gap-px pt-[2px] pr-1 pl-px">
        <input aria-label="Macro recorder" className="h-[23px] w-full border-2 border-t-[#7c7c70] border-r-[#f4f4f4] border-b-[#f4f4f4] border-l-[#7c7c70] bg-[#dcc2c4] outline-none" />
        <input aria-label="Script listener" className="h-[23px] w-full border-2 border-t-[#7c7c70] border-r-[#e4e4e4] border-b-[#e4e4e4] border-l-[#7c7c70] bg-white outline-none" />
      </div>

      <div className="w-[280px] border-l-2 border-l-[#808080] pl-[2px]">
        <div className="mt-1 flex h-[22px] items-center">
          <button aria-label="Selection Lock Toggle" className="flex w-6 shrink-0 justify-center">
            <svg width="10" height="14" viewBox="0 0 10 14" fill="none" stroke="#111">
              <path d="M2.500 6V3.500c0-3 5-3 5 0V6" strokeWidth="1.500" />
              <path d="M1 6.500h8M1 8.500h8M1 10.500h8M1 12.500h8" strokeWidth="1.400" />
            </svg>
          </button>
          <button aria-label="Absolute Mode" className="mr-[2px] ml-[3px] flex w-6 shrink-0 justify-center">
            <svg width="15" height="15" viewBox="0 0 15 15" fill="none" stroke="#111">
              <path d="M.5.5h14v14H.5zM7.500 1v13M1 7.500h13" />
              <circle cx="7.500" cy="7.500" r="2" fill="#111" />
            </svg>
          </button>
          <Coord axis="X" value="39.13" className="w-[58px]" />
          <Spinner label="X" />
          <Coord axis="Y" value="-56.039" className="w-[58px]" />
          <Spinner label="Y" />
          <Coord axis="Z" value="20.0" className="min-w-0 flex-1">
            <Step n="٧" className="-top-2 -right-1" />
          </Coord>
        </div>
        <div className="mt-[3px] flex h-5 gap-[3px] pr-[3px]">
          <p className="w-[172px] overflow-visible border-t border-l border-[#707070] pl-1 leading-[20px] whitespace-nowrap">Click and drag to select and move</p>
          <button className="flex-1 border-t border-l border-[#707070] pl-[5px] text-left whitespace-nowrap">Add Time Tag</button>
        </div>
      </div>

      <Button className="mt-[3px] mr-[2px] h-11 w-[43px]">
        <svg width="26" height="12" viewBox="0 0 26 12" fill="none" stroke="#000" strokeWidth="2">
          <circle cx="5" cy="6" r="3.500" />
          <path d="M9 6h16M19 6v5M23 6v4" />
        </svg>
      </Button>
      <div className="mt-[3px] flex w-[51px] flex-col gap-px pr-[2px] pl-px">
        <Button className="h-[22px]">Auto Key</Button>
        <Button className="h-[21px]">Set Key</Button>
      </div>
      <div className="mt-[3px] flex w-[118px] flex-col gap-[2px] pr-px pl-px">
        <Combo label="Key set" value="Selected" />
        <Button className="h-[22px]">Key Filters...</Button>
      </div>

      <div className="w-[129px] pt-[2px] pl-[2px]">
        <div className="flex items-center">
          <Glyph label="Go to Start" className="w-6"><path d="M1 4h2v10H1zM10 4v10L3 9zM17 4v10l-7-5z" fill="#000" /></Glyph>
          <Divider />
          <Glyph label="Previous Frame" className="w-[22px]"><path d="M9 5v8L2 9zM10 5h2v8h-2zM13.500 5h2v8h-2z" fill="#000" /></Glyph>
          <Glyph label="Play Animation" className="w-[22px]" flyout>
            <path d="M2 2h14v14H2z" stroke="#000" strokeWidth="2" />
            <path d="M6 5l7 4-7 4z" fill="#000" />
          </Glyph>
          <Glyph label="Next Frame" className="w-[22px]"><path d="M9 5v8l7-4zM6 5h2v8H6zM2.500 5h2v8h-2z" fill="#000" /></Glyph>
          <Divider />
          <Glyph label="Go to End" className="w-[22px]"><path d="M15 4h2v10h-2zM8 4v10l7-5zM1 4v10l7-5z" fill="#000" /></Glyph>
          <Divider />
        </div>
        <div className="flex items-center">
          <Glyph label="Key Mode Toggle" className="w-6"><path d="M3 5h1v7H3zM8.500 5v7L4 8.500zM9.500 5v7L14 8.500zM14 5h1v7h-1z" fill="#000" /></Glyph>
          <input aria-label="Current frame" defaultValue="0" className="ml-[3px] h-5 w-[68px] border-t-2 border-r border-b border-l-2 border-t-black border-r-[#f0f0f0] border-b-[#f0f0f0] border-l-black bg-[#e1e1e1] px-[2px] outline-none" />
          <Divider />
          <Glyph label="Time Configuration" className="w-[22px]">
            <path d="M2.500 3.500h10v10h-10zM2 6.500h10" stroke="#444" />
            <circle cx="11.500" cy="10.500" r="4.500" fill="#d8c8c8" stroke="#a01818" />
            <path d="M11.500 8v3h2.500" stroke="#a01818" />
          </Glyph>
        </div>
      </div>

      <div className="grid w-[98px] grid-cols-4 pt-[2px] pr-1 pl-px">
        <Glyph label="Zoom">
          <path d="M10 10l6 6" stroke="#1c2c9c" strokeWidth="3" />
          <circle cx="7" cy="7" r="4.500" fill="#f4f4f4" stroke="#555" strokeWidth="1.500" />
        </Glyph>
        <Glyph label="Zoom All">
          <path d="M6.500 1.500h10v10h-10zM11.500 1v11M6 6.500h11" stroke="#a01818" />
          <circle cx="6" cy="10" r="3.500" fill="#f4f4f4" stroke="#555" />
          <path d="M4 12l-3 4" stroke="#1c2c9c" strokeWidth="2" />
        </Glyph>
        <Glyph label="Zoom Extents" flyout>
          <path d="M1 4V1h3M14 1h3v3M1 14v3h3" stroke="#222" />
          <path d="M3.500 6.500h8v8h-8zM3.500 6.500l3-3h8l-3 3M14.500 3.500v8l-3 3" fill="#b8c4dc" stroke="#1c2c6c" />
        </Glyph>
        <Glyph label="Zoom Extents All" flyout>
          <path d="M6.500 1.500h10v9h-10zM11.500 1v10M6 5.500h11" stroke="#a01818" />
          <path d="M1.500 9.500h6v6h-6zM1.500 9.500l2-2h6l-2 2M9.500 7.500v6l-2 2" fill="#dde" stroke="#1c2c9c" />
        </Glyph>
        <Glyph label="Region Zoom">
          <path d="M1 1h16v16H1z" fill="#eee" stroke="#111" strokeWidth="1.500" strokeDasharray="2 2" />
          <circle cx="8" cy="8" r="4" fill="#fff" stroke="#555" />
          <path d="M11 11l4 4" stroke="#1c2c9c" strokeWidth="2.500" />
        </Glyph>
        <Glyph label="Pan">
          <path d="M6 16L1.500 10C1 8 3 8 4 9.500L5 11 4 4c0-2 2-2 2.500 0L7.500 8V2.500c0-2 2-2 2.200 0L10 8l1.500-5c.5-2 2.500-1 2 1L13 9l1.500-3c1-1.500 2.500-.5 2 1l-2 6-2 4z" fill="#f6f6f6" stroke="#333" />
        </Glyph>
        <Glyph label="Arc Rotate" flyout>
          <path d="M8.500 1v9l8 1M8.500 10l-7 6" stroke="#222" />
          <ellipse cx="8.500" cy="10" rx="5" ry="4" stroke="#1c2c9c" />
          <path d="M6 4l2.500-4L11 4zM13 8l5 3-5 2zM0 17l2-4 2 3z" fill="#1c2c6c" />
        </Glyph>
        <Glyph label="Min/Max Toggle">
          <path d="M8.500 7.500h8v9h-8z" fill="#eee" stroke="#1c2c9c" />
          <path d="M1.500 1.500h11v9h-11z" fill="#dde" stroke="#1c2c9c" strokeWidth="1.500" />
          <path d="M4.500 3.500l5 5M4 6V3.500h3M10 6v2.500H7" stroke="#111" />
        </Glyph>
      </div>
    </footer>
  );
}

/* ---------- window ---------- */

const caption = "flex size-[21px] items-center justify-center rounded-[3px] border border-white";

export default function App() {
  return (
    <div className="flex min-h-screen flex-col bg-[#c4c4c4] font-['Liberation_Sans',sans-serif] text-black">
      <header className="flex h-[26px] items-center gap-[2px] bg-linear-to-b from-[#3c96ff] via-[#0055e5] via-15% to-[#0066ff] px-[3px]">
        <svg width="15" height="13" viewBox="0 0 15 13">
          <path d="M0 0h15v13H0z" fill="#222" />
          <path d="M1 2h2v9H1zM12 2h2v9h-2zM4 3l4-2 3 2-1 7-3 2-3-3z" fill="#ccc" />
          <path d="M6 4l2 2 2-2M8 6v4" stroke="#222" fill="none" />
        </svg>
        <h1 className="ml-[2px] flex-1 text-[14px] leading-5 font-bold text-white [text-shadow:1px_1px_#0a2a80]">Untitled - 3ds max 5 - Network License</h1>
        <button aria-label="Minimize" className={clsx(caption, "bg-[#2e62e4]")}>
          <svg width="13" height="13" viewBox="0 0 13 13"><path d="M2 9h6v3H2z" fill="#fff" /></svg>
        </button>
        <button aria-label="Restore" className={clsx(caption, "bg-[#2e62e4]")}>
          <svg width="13" height="13" viewBox="0 0 13 13" fill="none" stroke="#fff"><path d="M4 4V2h7v6H9M2 6h6v5H2z" strokeWidth="1.500" /></svg>
        </button>
        <button aria-label="Close" className={clsx(caption, "bg-[#e0482c]")}>
          <svg width="13" height="13" viewBox="0 0 13 13" stroke="#fff" strokeWidth="2"><path d="M2 2l9 9M11 2l-9 9" /></svg>
        </button>
      </header>

      <nav className="flex h-[19px] items-center gap-[10px] bg-[#ece9d8] pl-[6px] text-[11px]">
        {menus.map((m) => (
          <button key={m} className="whitespace-nowrap">{m}</button>
        ))}
      </nav>

      <Toolbar />

      <main className="flex flex-1">
        <div className="flex min-w-0 flex-1 flex-col">
          <div className="grid flex-1 grid-cols-2 grid-rows-2 gap-1">
            <TopView />
            <FrontView />
            <LeftView />
            <CameraView />
          </div>
          <TimeSlider />
          <TrackBar />
        </div>
        <CommandPanel />
      </main>

      <StatusBar />
    </div>
  );
}
